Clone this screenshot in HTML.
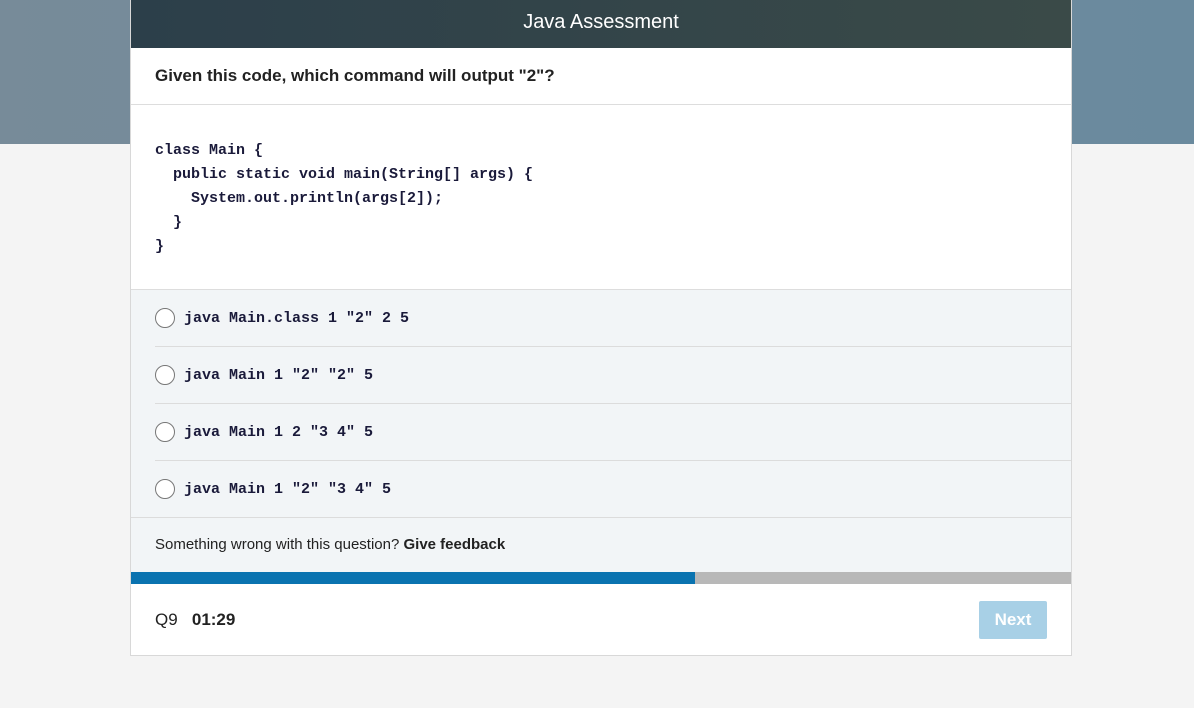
<!DOCTYPE html>
<html><head><style>
body{margin:0;width:1194px;height:708px;background:#f4f4f4;font-family:"Liberation Sans",sans-serif;position:relative;overflow:hidden}
.bg{position:absolute;left:0;top:0;width:1194px;height:144px;background:linear-gradient(90deg,#778b99,#6a8a9e)}
.card{position:absolute;left:130px;top:0;width:940px;height:655px;background:#fff;border:1px solid #d8d8d8;border-top:none}
.hd{height:48px;background:linear-gradient(90deg,#2c3f4a,#3a4a48);color:#fff;font-size:20px;text-align:center;line-height:44px}
.q{height:56px;border-bottom:1px solid #ddd;font-weight:bold;font-size:17px;padding-left:24px;line-height:56px;color:#222}
pre{margin:0;height:185px;padding:34px 0 0 24px;box-sizing:border-box;font-family:"Liberation Mono",monospace;font-size:15px;font-weight:bold;line-height:24px;color:#1a1a3a;border-bottom:1px solid #ddd}
.opts{background:#f2f5f7}
.o{margin-left:24px;height:56px;border-bottom:1px solid #dcdcdc;display:flex;align-items:center;font-family:"Liberation Mono",monospace;font-weight:bold;font-size:15px;color:#1a1a3a}
.o.l{margin-left:0;padding-left:24px}
.r{width:18px;height:18px;border:1px solid #777;border-radius:50%;margin-right:9px;background:#fff}
.fb{height:54px;line-height:54px;padding-left:24px;font-size:15px;color:#222;background:#f2f5f7}
.pb{height:12px;background:#b8b8b8}.pb div{width:564px;height:12px;background:#0a73b0}
.ft{height:71px;display:flex;align-items:center;padding:0 24px;font-size:17px;color:#222}
.btn{margin-left:auto;width:68px;height:38px;background:#a8d0e6;color:#fff;font-weight:bold;text-align:center;line-height:38px;border-radius:2px}
</style></head><body>
<div class="bg"></div>
<div class="card">
<div class="hd">Java Assessment</div>
<div class="q">Given this code, which command will output "2"?</div>
<pre>class Main {
  public static void main(String[] args) {
    System.out.println(args[2]);
  }
}</pre>
<div class="opts">
<div class="o"><span class="r"></span>java Main.class 1 ″2″ 2 5</div>
<div class="o"><span class="r"></span>java Main 1 ″2″ ″2″ 5</div>
<div class="o"><span class="r"></span>java Main 1 2 ″3 4″ 5</div>
<div class="o l"><span class="r"></span>java Main 1 ″2″ ″3 4″ 5</div>
</div>
<div class="fb">Something wrong with this question? <b>Give feedback</b></div>
<div class="pb"><div></div></div>
<div class="ft">Q9&nbsp;&nbsp;&nbsp;<b>01:29</b><div class="btn">Next</div></div>
</div>
</body></html>
